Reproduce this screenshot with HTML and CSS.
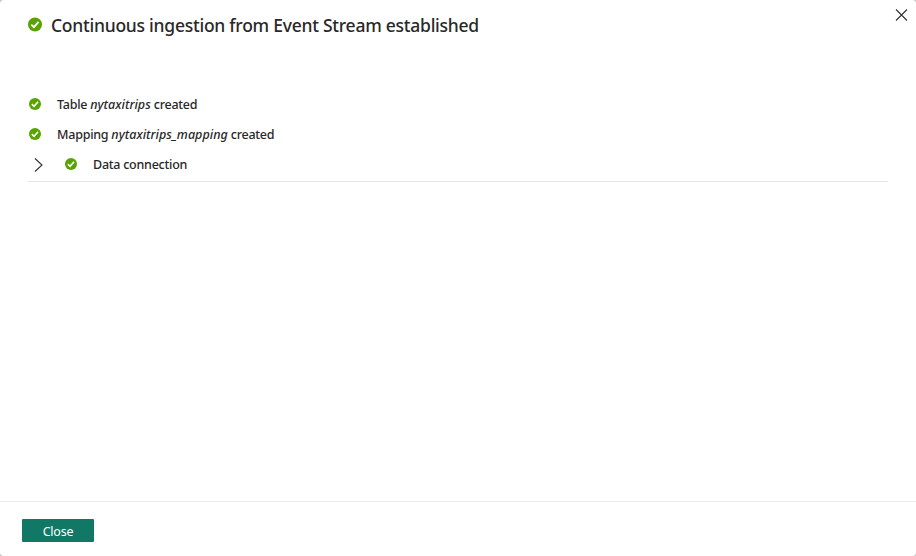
FILE: index.html
```html
<!DOCTYPE html>
<html lang="en">
<head>
<meta charset="utf-8">
<title>Continuous ingestion</title>
<link rel="stylesheet" href="styles.css">
</head>
<body>
<svg width="0" height="0" class="defs" aria-hidden="true">
  <symbol id="check" viewBox="0 0 14 14">
    <circle cx="7" cy="7" r="7" fill="#57a300"/>
    <path d="M3.3 7.1 5.9 9.7 10.6 4.4" fill="none" stroke="#fff" stroke-width="1.9"/>
  </symbol>
</svg>
<main class="dialog">
  <header class="header">
    <svg class="status status-large"><use href="#check"/></svg>
    <h1 class="title">Continuous ingestion from Event Stream established</h1>
    <button class="dismiss" aria-label="Dismiss"><svg width="13" height="12" viewBox="0 0 13 12"><path d="M1 .5 12 11.5M12 .5 1 11.5" stroke="#323130" stroke-width="1.1"/></svg></button>
  </header>
  <section class="steps">
    <div class="step"><svg class="status"><use href="#check"/></svg><span class="label">Table <em>nytaxitrips</em> created</span></div>
    <div class="step"><svg class="status"><use href="#check"/></svg><span class="label">Mapping <em>nytaxitrips_mapping</em> created</span></div>
    <div class="step step-group"><svg class="chevron" viewBox="0 0 9 14"><path d="M1 .5 8 7 1 13.5" fill="none" stroke="#323130" stroke-width="1.1"/></svg><svg class="status"><use href="#check"/></svg><span class="label">Data connection</span></div>
  </section>
  <footer class="footer"><button class="close">Close</button></footer>
</main>
</body>
</html>
```
FILE: styles.css
```css
* { box-sizing: border-box; }
body {
  margin: 0;
  background: #c8c8c8;
  color: #292827;
  font-family: "Noto Sans", "Open Sans", sans-serif;
}
.defs { display: block; position: absolute; }
button { border: 0; padding: 0; font-family: inherit; }
svg { display: block; flex: none; }
.dialog {
  display: flex;
  flex-direction: column;
  height: 556px;
  background: #fff;
  border-radius: 4px;
}
.header {
  display: flex;
  align-items: flex-start;
  height: 95px;
  padding: 9px 8px 0 28px;
}
.status { width: 12px; height: 12px; }
.status-large { width: 14px; height: 15px; margin-top: 8px; }
.title {
  margin: 4px 0 0 9px;
  font-size: 17.5px;
  line-height: 24px;
  font-weight: 500;
  letter-spacing: -0.25px;
  white-space: nowrap;
}
.dismiss { margin-left: auto; background: none; }
.steps { margin: 0 28px; border-bottom: 1px solid #e6e6e6; height: 87px; }
.step { display: flex; align-items: center; height: 30px; padding-left: 1px; margin-top: -6px; }
.step + .step { margin-top: 0; }
.label {
  margin-left: 16px;
  padding-top: 2px;
  font-size: 12.5px;
  line-height: 18px;
  font-weight: 500;
  letter-spacing: -0.25px;
  white-space: nowrap;
}
.label em { letter-spacing: 0.02px; }
.step-group { padding-left: 6px; }
.chevron { width: 9px; height: 14px; margin-top: 2px; margin-right: 22px; }
.footer {
  margin-top: auto;
  height: 55px;
  padding: 17px 22px 0;
  border-top: 1px solid #eaeaea;
}
.close {
  display: block;
  width: 72px;
  height: 23px;
  padding-top: 2px;
  border-radius: 1px;
  background: #117865;
  color: #fff;
  font-size: 12.5px;
  line-height: 21px;
  letter-spacing: -0.2px;
}
```
